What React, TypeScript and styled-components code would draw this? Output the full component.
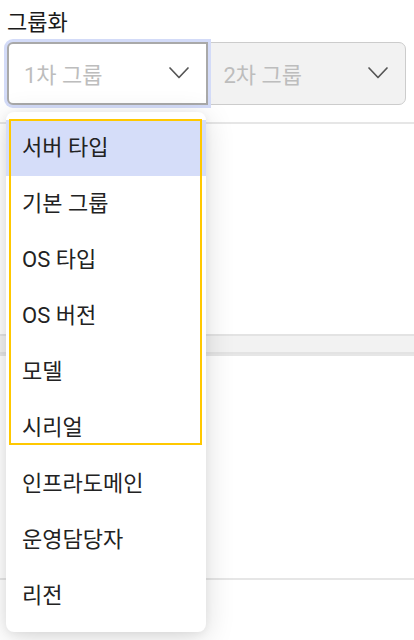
import React from "react";
import styled, { createGlobalStyle } from "styled-components";

const GlobalStyle = createGlobalStyle`
  html, body {
    margin: 0;
    padding: 0;
    background: #ffffff;
    font-family: Roboto, "Noto Sans CJK KR", "Noto Sans", sans-serif;
  }
  * { box-sizing: border-box; }
`;

const Page = styled.div`
  position: relative;
  width: 414px;
  height: 640px;
  overflow: hidden;
  background: #fff;
`;

const Label = styled.div`
  padding: 8px 0 0 7px;
  height: 38px;
  font-size: 22px;
  line-height: 30px;
  color: #1a1a1a;
`;

const SelectRow = styled.div`
  display: flex;
  margin: 4px 0 0 7px;
  width: 399px;
  height: 63px;
`;

const SelectBox = styled.div<{ $active?: boolean }>`
  flex: 1;
  display: flex;
  align-items: center;
  justify-content: space-between;
  padding: 0 17px 2px 15px;
  font-size: 22px;
  color: #bdbdbd;
  background: ${(p) => (p.$active ? "#ffffff" : "#f2f2f2")};
  border: ${(p) => (p.$active ? "2px solid #a9a9a9" : "1px solid #cccccc")};
  border-radius: ${(p) => (p.$active ? "6px 0 0 6px" : "0 7px 7px 0")};
  box-shadow: ${(p) => (p.$active ? "0 0 0 3px #d3dbf8" : "none")};
  position: relative;
  z-index: ${(p) => (p.$active ? 1 : 0)};
`;

const Chevron = styled.svg`
  width: 20px;
  height: 12px;
  flex: none;
`;

const Content = styled.div`
  margin-top: 17px;
`;

const Section = styled.div<{ $h: number }>`
  height: ${(p) => p.$h}px;
  border-top: 2px solid #e6e6e6;
`;

const Band = styled.div`
  height: 20px;
  background: #f2f2f2;
  border-top: 2px solid #e3e3e3;
  border-bottom: 2px solid #e3e3e3;
`;

const Panel = styled.div`
  position: absolute;
  top: 112px;
  left: 6px;
  width: 200px;
  padding: 8px 0;
  background: #fff;
  border-radius: 8px;
  box-shadow: 0 6px 30px rgba(0, 0, 0, 0.14), 0 2px 8px rgba(0, 0, 0, 0.06);
  z-index: 5;
`;

const Item = styled.div<{ $selected?: boolean }>`
  height: 56px;
  display: flex;
  align-items: center;
  padding: 0 0 6px 16px;
  font-size: 22px;
  color: #222;
  background: ${(p) => (p.$selected ? "#d5ddf9" : "transparent")};
`;

const Focus = styled.div`
  position: absolute;
  top: 7px;
  left: 3px;
  width: 193px;
  height: 326px;
  border: 2px solid #ffc800;
  pointer-events: none;
`;

const ChevronIcon = () => (
  <Chevron viewBox="0 0 20 12">
    <polyline
      points="1,1 10,10.5 19,1"
      fill="none"
      stroke="#555"
      strokeWidth="1.7"
      strokeLinecap="round"
      strokeLinejoin="round"
    />
  </Chevron>
);

const items = [
  "서버 타입",
  "기본 그룹",
  "OS 타입",
  "OS 버전",
  "모델",
  "시리얼",
  "인프라도메인",
  "운영담당자",
  "리전",
];

export default function App() {
  return (
    <Page>
      <GlobalStyle />
      <Label>그룹화</Label>
      <SelectRow>
        <SelectBox $active>
          <span>1차 그룹</span>
          <ChevronIcon />
        </SelectBox>
        <SelectBox>
          <span>2차 그룹</span>
          <ChevronIcon />
        </SelectBox>
      </SelectRow>
      <Content>
        <Section $h={212} />
        <Band />
        <Section $h={224} />
        <Section $h={60} />
      </Content>
      <Panel>
        {items.map((t, i) => (
          <Item key={t} $selected={i === 0}>
            {t}
          </Item>
        ))}
        <Focus />
      </Panel>
    </Page>
  );
}
